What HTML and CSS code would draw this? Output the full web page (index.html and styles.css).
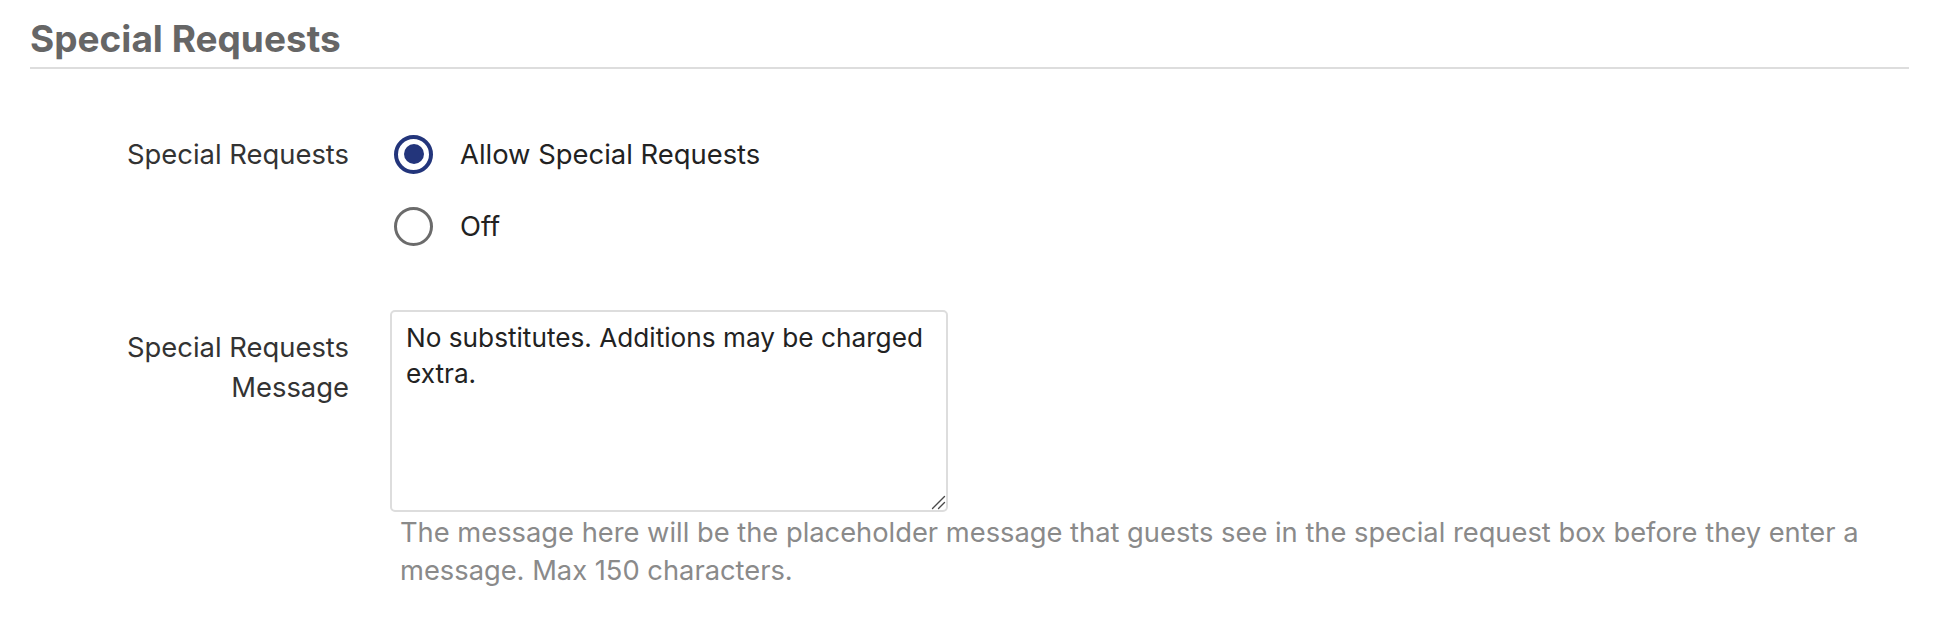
FILE: index.html
```html
<!DOCTYPE html>
<html lang="en">
<head>
<meta charset="utf-8">
<title>Special Requests</title>
<link rel="stylesheet" href="styles.css">
</head>
<body>
<section class="section">
  <h2 class="section-title">Special Requests</h2>

  <div class="field field-radios">
    <div class="field-label">Special Requests</div>
    <div class="field-control radios">
      <label class="radio is-checked">
        <span class="radio-circle"><span class="radio-dot"></span></span>
        <span class="radio-text">Allow Special Requests</span>
      </label>
      <label class="radio">
        <span class="radio-circle"></span>
        <span class="radio-text">Off</span>
      </label>
    </div>
  </div>

  <div class="field field-message">
    <div class="field-label multiline">Special Requests Message</div>
    <div class="field-control">
      <div class="message-wrap">
        <textarea class="message-box" readonly>No substitutes. Additions may be charged extra.</textarea>
        <svg class="grip" width="16" height="16" viewBox="0 0 16 16" aria-hidden="true">
          <path d="M14.5 2.5 L2.5 14.5 M14.5 8.5 L8.5 14.5" stroke="#4a4a4a" stroke-width="1.4" fill="none" stroke-linecap="round"/>
        </svg>
      </div>
      <p class="help">The message here will be the placeholder message that guests see in the special request box before they enter a message. Max 150 characters.</p>
    </div>
  </div>
</section>
</body>
</html>
```

FILE: styles.css
```css
html, body {
  margin: 0;
  padding: 0;
  background: #ffffff;
}

body {
  font-family: Inter, "Liberation Sans", Arial, sans-serif;
  color: #2b2b2b;
}

.section {
  padding: 0 25px 0 30px;
}

.section-title {
  margin: 0;
  padding: 17px 0 7px;
  font-size: 37px;
  line-height: 43px;
  font-weight: 700;
  color: #666666;
  border-bottom: 2px solid #dddddd;
}

.field {
  display: grid;
  grid-template-columns: 319px 1fr;
  column-gap: 41px;
}

.field-radios {
  margin-top: 65px;
}

.field-label {
  font-size: 27.4px;
  line-height: 40px;
  text-align: right;
  color: #333333;
  padding-left: 50px;
}

.field-label.multiline {
  line-height: 40px;
  padding-top: 17px;
}

.radios {
  display: flex;
  flex-direction: column;
  gap: 32px;
  padding-left: 4px;
}

.radio {
  display: flex;
  align-items: center;
  gap: 27px;
  height: 40px;
  font-size: 27.4px;
  color: #222222;
}

.radio-circle {
  box-sizing: border-box;
  width: 39px;
  height: 39px;
  border-radius: 50%;
  border: 3px solid #6b6b6b;
  display: flex;
  align-items: center;
  justify-content: center;
  flex-shrink: 0;
}

.radio.is-checked .radio-circle {
  border: 4px solid #23357b;
}

.radio-dot {
  width: 20px;
  height: 20px;
  border-radius: 50%;
  background: #23357b;
}

.field-message {
  margin-top: 64px;
}

.message-wrap {
  position: relative;
  width: 558px;
}

.message-box {
  display: block;
  box-sizing: border-box;
  width: 558px;
  height: 202px;
  margin: 0;
  padding: 8px 14px;
  border: 2px solid #dddddd;
  border-radius: 5px;
  font-family: Inter, "Liberation Sans", Arial, sans-serif;
  font-size: 26.2px;
  line-height: 36px;
  color: #222222;
  background: #ffffff;
  resize: none;
  outline: none;
}

.grip {
  position: absolute;
  right: 2px;
  bottom: 2px;
}

.help {
  margin: 2px 0 0 10px;
  font-size: 27.3px;
  line-height: 38px;
  color: #8a8a8a;
}
```
